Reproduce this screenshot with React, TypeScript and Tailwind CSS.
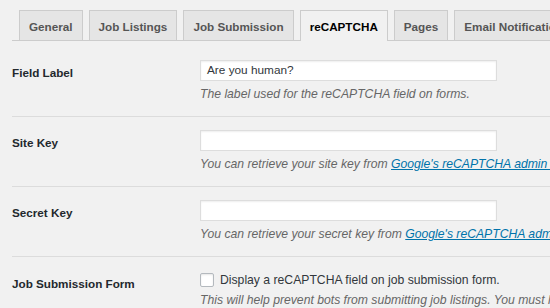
import React from 'react'

const tabs = [
  { label: 'General' },
  { label: 'Job Listings' },
  { label: 'Job Submission' },
  { label: 'reCAPTCHA', active: true },
  { label: 'Pages' },
  { label: 'Email Notifications' },
]

function Row({ label, children, first }: { label: string; children: React.ReactNode; first?: boolean }) {
  return (
    <div className={`flex border-b border-[#dcdcdc] ${first ? 'mt-[6px]' : ''}`}>
      <div className="w-[188px] shrink-0 pt-[17px] text-[11.7px] leading-[17px] font-bold text-[#23282d]">{label}</div>
      <div className="flex-1 min-w-0 pt-[13px] pb-[14px]">{children}</div>
    </div>
  )
}

function TextInput({ value }: { value?: string }) {
  return (
    <div className="w-[297px] h-[21px] bg-white border border-[#dddddd] shadow-[inset_0_1px_2px_rgba(0,0,0,0.07)] px-[6px] text-[11.8px] leading-[19px] text-[#32373c]">
      {value}
    </div>
  )
}

function Desc({ children }: { children: React.ReactNode }) {
  return <p className="mt-[5px] text-[12.2px] leading-[16px] italic text-[#666666] whitespace-nowrap">{children}</p>
}

export default function App() {
  return (
    <div className="w-[550px] h-[308px] overflow-hidden bg-[#f1f1f1] pl-[12px] font-['Liberation_Sans',Arial,sans-serif]">
      <div className="flex items-end gap-[6px] pt-[10px] pl-[7px] border-b border-[#cccccc] h-[41px] whitespace-nowrap">
        {tabs.map(t => (
          <div
            key={t.label}
            className={
              t.active
                ? 'h-[31px] -mb-px px-[9px] border border-b-0 border-[#cccccc] bg-[#f1f1f1] text-black text-[11.7px] font-bold leading-[31px]'
                : 'h-[30px] px-[9px] border border-b-0 border-[#cccccc] bg-[#e5e5e5] text-[#555555] text-[11.7px] font-bold leading-[31px]'
            }
          >
            {t.label}
          </div>
        ))}
      </div>

      <Row label="Field Label" first>
        <TextInput value="Are you human?" />
        <Desc>The label used for the reCAPTCHA field on forms.</Desc>
      </Row>
      <Row label="Site Key">
        <TextInput />
        <Desc>
          You can retrieve your site key from{' '}
          <a className="text-[#0073aa] underline">Google's reCAPTCHA admin dashboard</a>.
        </Desc>
      </Row>
      <Row label="Secret Key">
        <TextInput />
        <Desc>
          You can retrieve your secret key from{' '}
          <a className="text-[#0073aa] underline">Google's reCAPTCHA admin dashboard</a>.
        </Desc>
      </Row>
      <div className="flex">
        <div className="w-[188px] shrink-0 pt-[18px] text-[11.7px] leading-[17px] font-bold text-[#23282d]">Job Submission Form</div>
        <div className="flex-1 min-w-0 pt-[16px]">
          <label className="flex items-center gap-[6px] text-[12.2px] leading-[14px] text-[#32373c] whitespace-nowrap">
            <span className="w-[14px] h-[14px] bg-white border border-[#b4b9be] rounded-[2px] shadow-[inset_0_1px_2px_rgba(0,0,0,0.1)]" />
            Display a reCAPTCHA field on job submission form.
          </label>
          <Desc>This will help prevent bots from submitting job listings. You must have entered a valid site key and secret key above.</Desc>
        </div>
      </div>
    </div>
  )
}
